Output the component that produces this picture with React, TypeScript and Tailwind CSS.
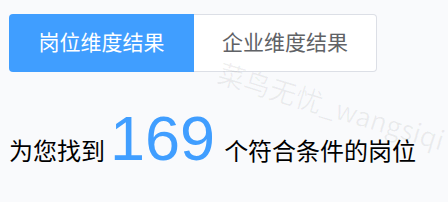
export default function App() {
  return (
    <div
      className="relative h-[202px] w-[448px] overflow-hidden bg-[#f9fafc] pl-[9px] pt-[14px]"
      style={{ fontFamily: '"Liberation Sans", "Noto Sans CJK SC", sans-serif' }}
    >
      <div className="flex h-[58px] w-[368px]">
        <div className="flex w-[185px] items-center justify-center rounded-l-[4px] bg-[#409eff] text-[21px] text-white">
          岗位维度结果
        </div>
        <div className="flex flex-1 items-center justify-center rounded-r-[4px] border border-l-0 border-[#dcdfe6] bg-white text-[21px] text-[#606266]">
          企业维度结果
        </div>
      </div>

      <div className="mt-[35px] flex items-baseline leading-none text-[#000]">
        <span className="text-[24px]">为您找到</span>
        <span className="ml-[5px] mr-[9px] text-[63px] text-[#409eff]">169</span>
        <span className="text-[24px]">个符合条件的岗位</span>
      </div>

      <div className="pointer-events-none absolute left-[223px] top-[58px] origin-top-left rotate-[17deg] whitespace-nowrap font-['Noto_Sans_CJK_SC',sans-serif] text-[27px] leading-none text-black/[0.06]">
        菜鸟无忧_wangsiqi
      </div>
    </div>
  )
}
